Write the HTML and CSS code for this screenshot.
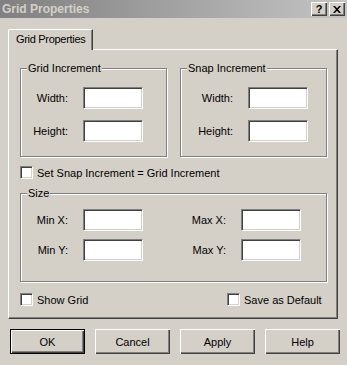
FILE: index.html
```html
<!DOCTYPE html>
<html lang="en">
<head>
    <meta charset="UTF-8">
    <meta name="viewport" content="width=device-width, initial-scale=1.0">
    <title>Grid Properties</title>
    <link rel="stylesheet" href="styles.css">
</head>
<body>
    <div class="window">
        <div class="titlebar">
            <span class="title">Grid Properties</span>
            <div class="title-buttons">
                <span class="tbtn">?</span>
                <span class="tbtn">
                    <svg width="8" height="7" viewBox="0 0 8 7">
                        <path d="M0 0h2l2 2.2L6 0h2L5 3.5 8 7H6L4 4.8 2 7H0l3-3.5z" fill="#000"/>
                    </svg>
                </span>
            </div>
        </div>

        <div class="tabs">
            <div class="tab active">Grid Properties</div>
        </div>

        <div class="panel">
            <div class="group-row">
                <fieldset class="group grid-inc">
                    <legend>Grid Increment</legend>
                    <div class="field"><label>Width:</label><input type="text" class="edit"></div>
                    <div class="field"><label>Height:</label><input type="text" class="edit"></div>
                </fieldset>
                <fieldset class="group snap-inc">
                    <legend>Snap Increment</legend>
                    <div class="field"><label>Width:</label><input type="text" class="edit"></div>
                    <div class="field"><label>Height:</label><input type="text" class="edit"></div>
                </fieldset>
            </div>

            <label class="check-row"><input type="checkbox" class="check">Set Snap Increment = Grid Increment</label>

            <fieldset class="group size">
                <legend>Size</legend>
                <div class="size-grid">
                    <label>Min X:</label><input type="text" class="edit">
                    <label>Max X:</label><input type="text" class="edit">
                    <label>Min Y:</label><input type="text" class="edit">
                    <label>Max Y:</label><input type="text" class="edit">
                </div>
            </fieldset>

            <div class="check-line">
                <label class="check-row"><input type="checkbox" class="check">Show Grid</label>
                <label class="check-row"><input type="checkbox" class="check">Save as Default</label>
            </div>
        </div>

        <div class="buttons">
            <button class="default">OK</button>
            <button>Cancel</button>
            <button>Apply</button>
            <button>Help</button>
        </div>
    </div>
</body>
</html>
```

FILE: styles.css
```css
body {
    margin: 0;
    background: #d4d0c8;
    font-family: "Liberation Sans", Arial, sans-serif;
    font-size: 11px;
    color: #000;
}

.window {
    width: 347px;
    height: 365px;
    overflow: hidden;
}

/* title bar */
.titlebar {
    height: 18px;
    padding: 0 2px;
    display: flex;
    align-items: center;
    justify-content: space-between;
    background: linear-gradient(to right, #808080, #c4c4c4);
}

.title {
    font-weight: bold;
    font-size: 12px;
    color: #d4d0c8;
}

.title-buttons {
    display: flex;
    gap: 2px;
}

.tbtn {
    width: 16px;
    height: 14px;
    box-sizing: border-box;
    display: flex;
    align-items: center;
    justify-content: center;
    background: #d4d0c8;
    font-weight: bold;
    font-size: 11px;
    line-height: 1;
    box-shadow: inset 1px 1px 0 #fff, inset -1px -1px 0 #404040, inset -2px -2px 0 #808080;
}

/* tab */
.tabs {
    margin-top: 11px;
    padding-left: 8px;
    display: flex;
    position: relative;
    z-index: 1;
}

.tab {
    width: 85px;
    height: 21px;
    box-sizing: border-box;
    margin-bottom: -1px;
    padding-left: 7px;
    line-height: 19px;
    font-size: 11px;
    letter-spacing: -0.3px;
    background: #d4d0c8;
    border-top: 1px solid #fff;
    border-left: 1px solid #fff;
    border-right: 1px solid #404040;
    border-top-left-radius: 2px;
    border-top-right-radius: 1px;
    box-shadow: inset -1px 0 0 #808080;
}

/* panel */
.panel {
    margin: 0 9px 0 8px;
    height: 270px;
    box-sizing: border-box;
    padding: 12px 0 0 11px;
    border-top: 1px solid #fff;
    border-left: 1px solid #fff;
    border-right: 1px solid #404040;
    border-bottom: 1px solid #404040;
    box-shadow: inset -1px -1px 0 #808080;
}

.group-row {
    display: flex;
    gap: 13px;
}

.group {
    margin: 0;
    padding: 12px 0 14px 0;
    border: 1px solid #808080;
    box-shadow: inset 1px 1px 0 #fff, 1px 1px 0 #fff;
    box-sizing: border-box;
    min-width: 0;
}

.group legend {
    margin-left: 6px;
    padding: 0 1px;
    line-height: 13px;
    background: #d4d0c8;
}

.grid-inc,
.snap-inc {
    width: 147px;
}

.field {
    display: flex;
    align-items: center;
}

.field + .field {
    margin-top: 11px;
}

.field label {
    width: 47px;
    margin-right: 15px;
    text-align: right;
}

.snap-inc .field label {
    width: 52px;
}

.edit {
    width: 60px;
    height: 22px;
    box-sizing: border-box;
    margin: 0;
    padding: 0 3px;
    background: #fff;
    border: 1px solid;
    border-color: #808080 #fff #fff #808080;
    box-shadow: inset 1px 1px 0 #404040, inset -1px -1px 0 #d4d0c8;
    font: inherit;
    outline: none;
}

/* checkboxes */
.check-row {
    display: flex;
    align-items: center;
    height: 13px;
    margin-top: 9px;
}

.check {
    appearance: none;
    width: 13px;
    height: 13px;
    box-sizing: border-box;
    margin: 0 4px 0 0;
    background: #fff;
    border: 1px solid;
    border-color: #808080 #fff #fff #808080;
    box-shadow: inset 1px 1px 0 #404040, inset -1px -1px 0 #d4d0c8;
}

/* size group */
.size {
    width: 307px;
    margin-top: 8px;
    padding: 9px 0 20px 0;
}

.size-grid {
    display: grid;
    grid-template-columns: 47px 60px 68px 60px;
    column-gap: 15px;
    row-gap: 8px;
    align-items: center;
}

.size-grid label {
    text-align: right;
}

.check-line {
    display: grid;
    grid-template-columns: 207px auto;
    margin-top: 11px;
}

.check-line .check-row {
    margin-top: 0;
}

/* bottom buttons */
.buttons {
    display: flex;
    gap: 10px;
    margin: 10px 0 0 10px;
}

.buttons button {
    width: 75px;
    height: 25px;
    padding: 0;
    background: #d4d0c8;
    border: none;
    font: inherit;
    color: #000;
    box-shadow: inset 1px 1px 0 #fff, inset -1px -1px 0 #404040, inset -2px -2px 0 #808080;
}

.buttons button.default {
    border: 1px solid #000;
}
```
